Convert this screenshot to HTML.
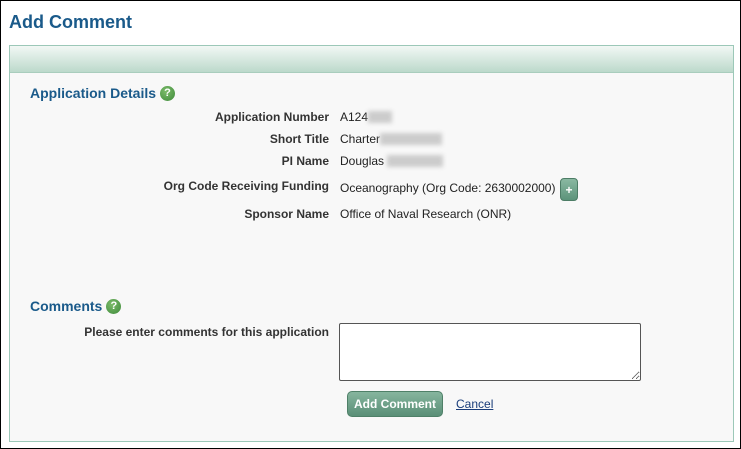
<!DOCTYPE html>
<html><head><style>
*{margin:0;padding:0;box-sizing:border-box}
body{width:741px;height:449px;background:#fff;border:1px solid #000;font-family:"Liberation Sans",Arial,sans-serif;position:relative;overflow:hidden}
.t{position:absolute;left:8px;top:11px;font-size:18px;font-weight:bold;color:#1a5a8a}
.panel{position:absolute;left:8px;top:44px;width:725px;height:397px;border:1px solid #9cc8b8;background:#f8f8f8}
.band{height:27px;background:linear-gradient(#f2f8f5,#bcd9cb);border-bottom:1px solid #a9cdbd}
.h{position:absolute;font-size:14px;font-weight:bold;color:#1a5a8a}
.q{display:inline-block;width:15px;height:15px;border-radius:50%;background:radial-gradient(circle at 40% 35%,#7cbb6a,#3d8a3a);color:#fff;font-size:11px;text-align:center;line-height:15px;vertical-align:2px;margin-left:4px}
.l{position:absolute;right:404px;font-size:12px;font-weight:bold;color:#333;text-align:right;white-space:nowrap}
.v{position:absolute;left:330px;font-size:12px;color:#222;white-space:nowrap}
.b{display:inline-block;background:#ccc;filter:blur(2px);height:12px;vertical-align:-2px}
.plus{position:absolute;left:550px;top:132px;width:18px;height:23px;border-radius:4px;background:linear-gradient(#8ab9a2,#5c937a);color:#fff;font-size:12px;font-weight:bold;text-align:center;line-height:22px;border:1px solid #4d7d66}
textarea{position:absolute;left:329px;top:277px;width:302px;height:58px;border:1px solid #555;border-radius:2px;background:#fff;resize:both}
.btn{position:absolute;left:337px;top:345px;width:96px;height:26px;border-radius:5px;background:linear-gradient(#86b59e,#5a8f77);border:1px solid #4f8068;color:#fff;font-size:12px;font-weight:bold;text-align:center;line-height:24px}
.c{position:absolute;left:446px;top:351px;font-size:12px;color:#1a3d7a;text-decoration:underline}
</style></head><body>
<div class="t">Add Comment</div>
<div class="panel">
<div class="band"></div>
<div class="h" style="left:20px;top:39px">Application Details<span class="q">?</span></div>
<div class="l" style="top:64px">Application Number</div><div class="v" style="top:64px">A124<span class="b" style="width:24px"></span></div>
<div class="l" style="top:86px">Short Title</div><div class="v" style="top:86px">Charter<span class="b" style="width:62px"></span></div>
<div class="l" style="top:108px">PI Name</div><div class="v" style="top:108px">Douglas <span class="b" style="width:56px"></span></div>
<div class="l" style="top:133px">Org Code Receiving Funding</div><div class="v" style="top:135px">Oceanography (Org Code: 2630002000)</div>
<div class="plus">+</div>
<div class="l" style="top:161px">Sponsor Name</div><div class="v" style="top:161px">Office of Naval Research (ONR)</div>
<div class="h" style="left:20px;top:252px">Comments<span class="q">?</span></div>
<div class="l" style="top:279px">Please enter comments for this application</div>
<textarea></textarea>
<div class="btn">Add Comment</div>
<div class="c">Cancel</div>
</div>
</body></html>
